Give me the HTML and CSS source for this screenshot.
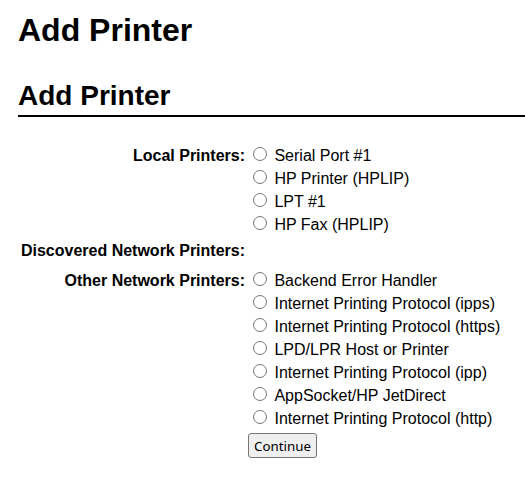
FILE: index.html
```html
<!DOCTYPE html>
<html>
<head>
<meta charset="utf-8">
<title>Add Printer</title>
<link rel="stylesheet" href="styles.css">
</head>
<body>
<h1 class="page-title">Add Printer</h1>
<h2 class="section-title">Add Printer</h2>
<form class="add-form">
  <div class="label">Local Printers:</div>
  <div class="options">
    <label class="opt"><input type="radio" name="device"><span>Serial Port #1</span></label>
    <label class="opt"><input type="radio" name="device"><span>HP Printer (HPLIP)</span></label>
    <label class="opt"><input type="radio" name="device"><span>LPT #1</span></label>
    <label class="opt"><input type="radio" name="device"><span>HP Fax (HPLIP)</span></label>
  </div>
  <div class="label">Discovered Network Printers:</div>
  <div class="options empty"></div>
  <div class="label">Other Network Printers:</div>
  <div class="options">
    <label class="opt"><input type="radio" name="device"><span>Backend Error Handler</span></label>
    <label class="opt"><input type="radio" name="device"><span>Internet Printing Protocol (ipps)</span></label>
    <label class="opt"><input type="radio" name="device"><span>Internet Printing Protocol (https)</span></label>
    <label class="opt"><input type="radio" name="device"><span>LPD/LPR Host or Printer</span></label>
    <label class="opt"><input type="radio" name="device"><span>Internet Printing Protocol (ipp)</span></label>
    <label class="opt"><input type="radio" name="device"><span>AppSocket/HP JetDirect</span></label>
    <label class="opt"><input type="radio" name="device"><span>Internet Printing Protocol (http)</span></label>
  </div>
  <div class="label"></div>
  <div class="actions"><button type="button" class="btn">Continue</button></div>
</form>
</body>
</html>
```
FILE: styles.css
```css
html, body {
  margin: 0;
  padding: 0;
  background: #fff;
}
body {
  padding-left: 18px;
  font-family: "Liberation Sans", Arial, sans-serif;
  font-size: 16px;
  color: #000;
}
.page-title {
  margin: 12px 0 0;
  font-size: 32px;
  line-height: 37px;
  font-weight: bold;
}
.section-title {
  margin: 31px 0 0;
  font-size: 28px;
  line-height: 32px;
  font-weight: bold;
  padding-bottom: 3px;
  border-bottom: 2px solid #000;
}
.add-form {
  margin-top: 27px;
  display: grid;
  grid-template-columns: 227px auto;
  column-gap: 3px;
  row-gap: 3px;
  line-height: 23px;
}
.label {
  text-align: right;
  font-weight: bold;
  white-space: nowrap;
}
.options {
  display: flex;
  flex-direction: column;
}
.options.empty {
  height: 27px;
}
.opt {
  display: block;
  white-space: nowrap;
}
.opt input {
  width: 14px;
  height: 14px;
  margin: 3px 7.45px 0 5px;
}
.actions {
  display: flex;
}
.btn {
  font-family: "Noto Sans", "DejaVu Sans", sans-serif;
  font-size: 13.33px;
  height: 25px;
  width: 69px;
  padding: 0;
  color: #000;
  background: #efefef;
  border: 1px solid #767676;
  border-radius: 3px;
}
```
